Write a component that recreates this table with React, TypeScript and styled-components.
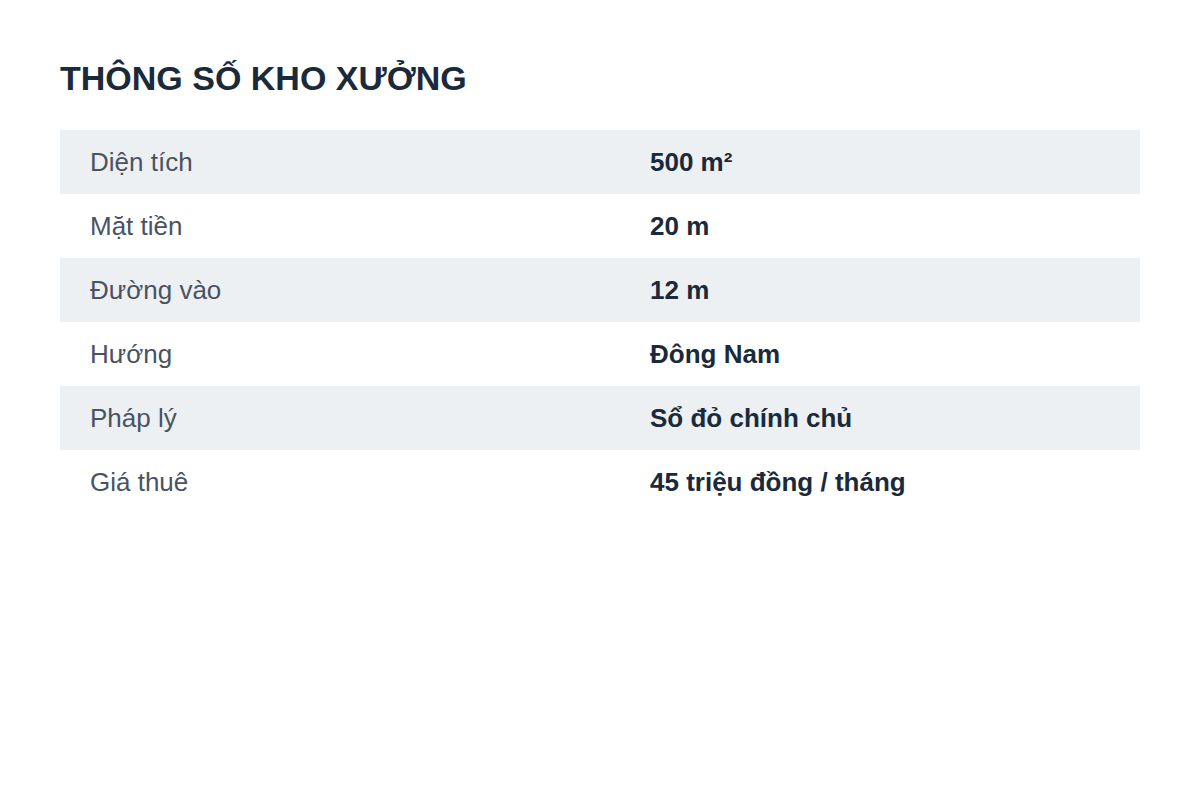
import React from 'react';
import styled, { createGlobalStyle } from 'styled-components';

const GlobalStyle = createGlobalStyle`
  html, body {
    margin: 0;
    padding: 0;
    background: #ffffff;
    font-family: "Liberation Sans", Arial, sans-serif;
  }
`;

const Page = styled.div`
  padding: 58px 60px;
`;

const Title = styled.h1`
  margin: 0 0 32px;
  font-size: 34px;
  line-height: 40px;
  font-weight: 700;
  color: #1b2a3a;
`;

const Table = styled.div`
  display: flex;
  flex-direction: column;
`;

const Row = styled.div<{ $striped: boolean }>`
  display: grid;
  grid-template-columns: 560px 1fr;
  height: 64px;
  align-items: center;
  background: ${(p) => (p.$striped ? '#edf0f3' : '#ffffff')};
`;

const Label = styled.div`
  padding: 0 30px;
  font-size: 26px;
  color: #4a5361;
`;

const Value = styled.div`
  padding: 0 30px;
  font-size: 26px;
  font-weight: 700;
  color: #1b2a3a;
`;

const specs = [
  ['Diện tích', '500 m²'],
  ['Mặt tiền', '20 m'],
  ['Đường vào', '12 m'],
  ['Hướng', 'Đông Nam'],
  ['Pháp lý', 'Sổ đỏ chính chủ'],
  ['Giá thuê', '45 triệu đồng / tháng'],
];

const App = () => {
  return (
    <Page>
      <GlobalStyle />
      <Title>THÔNG SỐ KHO XƯỞNG</Title>
      <Table>
        {specs.map(([label, value], index) => (
          <Row key={label} $striped={index % 2 === 0}>
            <Label>{label}</Label>
            <Value>{value}</Value>
          </Row>
        ))}
      </Table>
    </Page>
  );
};

export default App;
